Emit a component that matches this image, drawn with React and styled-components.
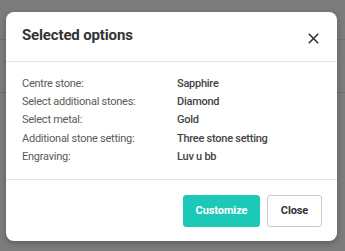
import React from 'react';
import styled, { createGlobalStyle } from 'styled-components';

const GlobalStyle = createGlobalStyle`
  html, body {
    margin: 0;
    padding: 0;
    background: #7c7c7c;
    font-family: Roboto, "Noto Sans", sans-serif;
  }
`;

const Backdrop = styled.div`
  position: relative;
  width: 345px;
  height: 251px;
  overflow: hidden;
  background: #7c7c7c;
  padding: 12px 8px 0 6px;
  box-sizing: border-box;
`;

// faint page content showing through the overlay
const PageLine = styled.div`
  position: absolute;
  left: 0;
  right: 0;
  top: ${p => p.top}px;
  height: 1px;
  background: #6f6f6f;
`;

const Modal = styled.div`
  position: relative;
  width: 331px;
  background: #fff;
  border-radius: 8px;
  box-shadow: 0 2px 6px rgba(0,0,0,0.25);
  color: #3a3a3a;
`;

const Header = styled.div`
  display: flex;
  align-items: center;
  justify-content: space-between;
  height: 49px;
  padding: 0 18px 0 16px;
  border-bottom: 1px solid #e2e2e2;
`;

const Title = styled.h2`
  margin: 0 0 3px;
  font-size: 15px;
  font-weight: 700;
  color: #333;
  letter-spacing: -0.15px;
`;

const CloseIcon = styled.button`
  border: 0;
  background: none;
  padding: 0;
  width: 11px;
  height: 11px;
  margin-top: 4px;
  display: flex;
  cursor: pointer;
`;

const Body = styled.div`
  padding: 12px 16px 13px 16px;
  border-bottom: 1px solid #e2e2e2;
`;

const Row = styled.div`
  display: grid;
  grid-template-columns: 155px 1fr;
  height: 18.4px;
  align-items: center;
  font-size: 11px;
  letter-spacing: -0.25px;
`;

const Label = styled.span`
  color: #5a5a5a;
`;

const Value = styled.span`
  color: #444;
  font-weight: 500;
`;

const Footer = styled.div`
  display: flex;
  justify-content: flex-end;
  gap: 7px;
  padding: 15px 15px 14px;
`;

const Button = styled.button`
  height: 32px;
  padding: 0;
  border-radius: 3px;
  font-family: inherit;
  font-size: 11px;
  font-weight: 700;
  letter-spacing: -0.1px;
  border: 1px solid ${p => p.primary ? '#1cc9b9' : '#c9c9d1'};
  background: ${p => p.primary ? '#1cc9b9' : '#fff'};
  color: ${p => p.primary ? '#fff' : '#333'};
  width: ${p => p.w}px;
`;

const options = [
  ['Centre stone:', 'Sapphire'],
  ['Select additional stones:', 'Diamond'],
  ['Select metal:', 'Gold'],
  ['Additional stone setting:', 'Three stone setting'],
  ['Engraving:', 'Luv u bb'],
];

const App = () => (
  <>
    <GlobalStyle />
    <Backdrop>
      <PageLine top={39} />
      <PageLine top={92} />
      <Modal>
        <Header>
          <Title>Selected options</Title>
          <CloseIcon aria-label="Close">
            <svg width="11" height="11" viewBox="0 0 11 11">
              <path d="M0.8 0.8L10.2 10.2M10.2 0.8L0.8 10.2" stroke="#333" strokeWidth="1.6" />
            </svg>
          </CloseIcon>
        </Header>
        <Body>
          {options.map(([label, value]) => (
            <Row key={label}>
              <Label>{label}</Label>
              <Value>{value}</Value>
            </Row>
          ))}
        </Body>
        <Footer>
          <Button primary w={77}>Customize</Button>
          <Button w={55}>Close</Button>
        </Footer>
      </Modal>
    </Backdrop>
  </>
);

export default App;
